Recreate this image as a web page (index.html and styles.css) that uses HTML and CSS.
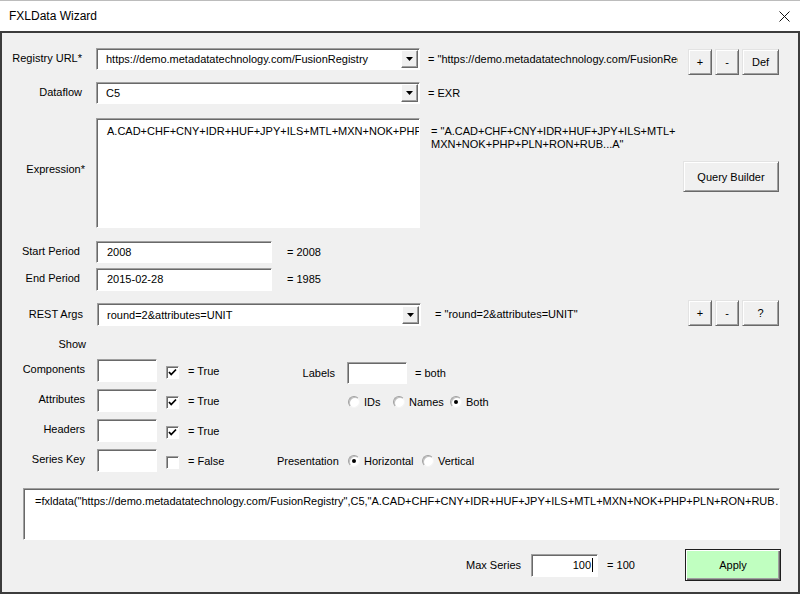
FILE: index.html
```html
<!DOCTYPE html>
<html lang="en">

<head>
    <meta charset="UTF-8">
    <title>FXLData Wizard</title>
    <link rel="stylesheet" href="styles.css">
</head>

<body>
    <div class="window">
        <div class="titlebar">
            <span class="title">FXLData Wizard</span>
            <svg class="close" width="11" height="11" viewBox="0 0 11 11">
                <path d="M0.5 0.5L10.5 10.5M10.5 0.5L0.5 10.5" stroke="#111" stroke-width="1" fill="none" />
            </svg>
        </div>

        <div class="dialog">
            <!-- registry -->
            <div class="row row-url">
                <div class="lbl">Registry URL*</div>
                <div class="combo sunken">
                    <span class="combo-text">https://demo.metadatatechnology.com/FusionRegistry</span>
                    <span class="drop"><svg width="7" height="4" viewBox="0 0 7 4"><path d="M0 0H7L3.5 4Z" /></svg></span>
                </div>
                <div class="eq eq-clip">= "https://demo.metadatatechnology.com/FusionReg</div>
                <div class="btns">
                    <button class="btn">+</button>
                    <button class="btn">-</button>
                    <button class="btn btn-wide">Def</button>
                </div>
            </div>

            <div class="row row-flow">
                <div class="lbl">Dataflow</div>
                <div class="combo sunken">
                    <span class="combo-text">C5</span>
                    <span class="drop"><svg width="7" height="4" viewBox="0 0 7 4"><path d="M0 0H7L3.5 4Z" /></svg></span>
                </div>
                <div class="eq">= EXR</div>
            </div>

            <!-- expression -->
            <div class="row row-expr">
                <div class="lbl lbl-expr">Expression*</div>
                <div class="memo sunken">A.CAD+CHF+CNY+IDR+HUF+JPY+ILS+MTL+MXN+NOK+PHP+PLN</div>
                <div class="eq eq-expr">= "A.CAD+CHF+CNY+IDR+HUF+JPY+ILS+MTL+<br>MXN+NOK+PHP+PLN+RON+RUB...A"</div>
                <button class="btn btn-query">Query Builder</button>
            </div>

            <div class="row row-start">
                <div class="lbl lbl-period">Start Period</div>
                <div class="textbox sunken">2008</div>
                <div class="eq eq-period">= 2008</div>
            </div>

            <div class="row row-end">
                <div class="lbl lbl-period">End Period</div>
                <div class="textbox sunken">2015-02-28</div>
                <div class="eq eq-period">= 1985</div>
            </div>

            <div class="row row-rest">
                <div class="lbl lbl-rest">REST Args</div>
                <div class="combo combo-rest sunken">
                    <span class="combo-text">round=2&amp;attributes=UNIT</span>
                    <span class="drop"><svg width="7" height="4" viewBox="0 0 7 4"><path d="M0 0H7L3.5 4Z" /></svg></span>
                </div>
                <div class="eq eq-rest">= "round=2&amp;attributes=UNIT"</div>
                <div class="btns">
                    <button class="btn">+</button>
                    <button class="btn">-</button>
                    <button class="btn btn-wide">?</button>
                </div>
            </div>

            <div class="show-title">Show</div>

            <!-- show options -->
            <div class="show">
                <div class="show-left">
                    <div class="opt-row">
                        <div class="lbl lbl-show">Components</div>
                        <div class="small-box sunken"></div>
                        <span class="check sunken"><svg width="11" height="11" viewBox="0 0 11 11"><path d="M2 5L4.2 7.5L9 2.5" stroke="#000" stroke-width="1.8" fill="none" /></svg></span>
                        <span class="eq eq-check">= True</span>
                    </div>
                    <div class="opt-row">
                        <div class="lbl lbl-show">Attributes</div>
                        <div class="small-box sunken"></div>
                        <span class="check sunken"><svg width="11" height="11" viewBox="0 0 11 11"><path d="M2 5L4.2 7.5L9 2.5" stroke="#000" stroke-width="1.8" fill="none" /></svg></span>
                        <span class="eq eq-check">= True</span>
                    </div>
                    <div class="opt-row">
                        <div class="lbl lbl-show">Headers</div>
                        <div class="small-box sunken"></div>
                        <span class="check sunken"><svg width="11" height="11" viewBox="0 0 11 11"><path d="M2 5L4.2 7.5L9 2.5" stroke="#000" stroke-width="1.8" fill="none" /></svg></span>
                        <span class="eq eq-check">= True</span>
                    </div>
                    <div class="opt-row">
                        <div class="lbl lbl-show">Series Key</div>
                        <div class="small-box sunken"></div>
                        <span class="check sunken"></span>
                        <span class="eq eq-check">= False</span>
                    </div>
                </div>

                <div class="show-right">
                    <div class="labels-row">
                        <div class="rlbl">Labels</div>
                        <div class="small-box sunken"></div>
                        <span class="eq">= both</span>
                    </div>
                    <div class="radio-row">
                        <span class="radio-opt opt-ids"><span class="radio"></span>IDs</span>
                        <span class="radio-opt opt-names"><span class="radio"></span>Names</span>
                        <span class="radio-opt"><span class="radio on"></span>Both</span>
                    </div>
                    <div class="pres-row">
                        <div class="rlbl">Presentation</div>
                        <span class="radio-opt opt-horiz"><span class="radio on"></span>Horizontal</span>
                        <span class="radio-opt"><span class="radio"></span>Vertical</span>
                    </div>
                </div>
            </div>

            <div class="formula sunken">=fxldata("https://demo.metadatatechnology.com/FusionRegistry",C5,"A.CAD+CHF+CNY+IDR+HUF+JPY+ILS+MTL+MXN+NOK+PHP+PLN+RON+RUB…A"</div>

            <div class="row row-bottom">
                <div class="max-lbl">Max Series</div>
                <div class="max-box sunken">100<span class="caret"></span></div>
                <div class="eq eq-max">= 100</div>
                <button class="btn btn-apply">Apply</button>
            </div>
        </div>
    </div>
</body>

</html>
```

FILE: styles.css
```css
* {
    box-sizing: border-box;
}

body {
    margin: 0;
    font-family: "Liberation Sans", Arial, sans-serif;
    font-size: 11px;
    color: #000;
    background: #f0f0f0;
}

.window {
    width: 800px;
    height: 594px;
    display: flex;
    flex-direction: column;
    background: #fff;
}

.titlebar {
    height: 31px;
    flex-shrink: 0;
    border-top: 1px solid #bcbcbc;
    display: flex;
    align-items: center;
    padding: 0 10px 0 9px;
}

.title {
    font-size: 12px;
}

.close {
    margin-left: auto;
}

.dialog {
    flex: 1;
    background: #f0f0f0;
    border: 2px solid #3c3c3c;
    display: flex;
    flex-direction: column;
}

/* 3d sunken look for edit fields */
.sunken {
    background: #fff;
    border: 1px solid;
    border-color: #a0a0a0 #fff #fff #a0a0a0;
    box-shadow: inset 1px 1px 0 #696969;
}

.row {
    display: flex;
    align-items: flex-start;
}

.lbl {
    width: 80px;
    flex-shrink: 0;
    text-align: right;
    line-height: 21px;
}

.eq {
    line-height: 22px;
    white-space: nowrap;
}

.row-url {
    margin-top: 15px;
}

.row-flow {
    margin-top: 7px;
}

.combo {
    width: 324px;
    height: 22px;
    margin-left: 14px;
    display: flex;
    align-items: center;
    padding-left: 9px;
}

.combo-text {
    flex: 1;
    white-space: nowrap;
    overflow: hidden;
}

.drop {
    width: 17px;
    height: 18px;
    margin-right: 1px;
    background: #f0f0f0;
    border: 1px solid;
    border-color: #fff #696969 #696969 #fff;
    box-shadow: inset -1px -1px 0 #a0a0a0;
    display: flex;
    align-items: center;
    justify-content: center;
}

.row > .eq {
    margin-left: 8px;
}

.eq-clip {
    width: 250px;
    overflow: hidden;
}

.btns {
    display: flex;
    gap: 3px;
    margin-left: auto;
    margin-right: 19px;
    margin-top: 1px;
}

.btn {
    height: 26px;
    width: 24px;
    padding: 0;
    font: inherit;
    color: #000;
    background: #f0f0f0;
    border: 1px solid;
    border-color: #e3e3e3 #696969 #696969 #e3e3e3;
    box-shadow: inset 1px 1px 0 #fff, inset -1px -1px 0 #a0a0a0;
}

.btn-wide {
    width: 37px;
}

/* expression */
.row-expr {
    margin-top: 14px;
}

.lbl-expr {
    width: 83px;
    padding-top: 44px;
    line-height: 14px;
}

.memo {
    width: 324px;
    height: 110px;
    margin-left: 11px;
    padding: 5px 0 0 10px;
    line-height: 14px;
    white-space: nowrap;
    overflow: hidden;
}

.row > .eq-expr {
    margin-left: 11px;
    margin-top: 7px;
    line-height: 13px;
}

.btn-query {
    width: 96px;
    height: 31px;
    margin-left: auto;
    margin-right: 19px;
    margin-top: 43px;
}

.row-start {
    margin-top: 13px;
}

.row-end {
    margin-top: 5px;
}

.lbl-period {
    width: 78px;
}

.textbox {
    width: 176px;
    height: 22px;
    margin-left: 16px;
    padding-left: 10px;
    line-height: 20px;
}

.row-end .textbox {
    height: 23px;
    line-height: 21px;
}

.row > .eq-period {
    margin-left: 15px;
}

/* rest args */
.row-rest {
    margin-top: 9px;
}

.lbl-rest {
    width: 81px;
    line-height: 22px;
    margin-top: 3px;
}

.combo-rest {
    height: 23px;
    margin-left: 14px;
    margin-top: 3px;
}

.row > .eq-rest {
    margin-left: 14px;
    line-height: 23px;
    margin-top: 3px;
}

.row-rest .btns {
    margin-top: 0;
}

.show-title {
    width: 84px;
    text-align: right;
    line-height: 14px;
    margin-top: 11px;
}

/* show options */
.show {
    display: flex;
    margin-top: 8px;
}

.show-left {
    width: 275px;
    display: flex;
    flex-direction: column;
    gap: 7px;
}

.opt-row {
    display: flex;
    align-items: center;
    height: 23px;
}

.lbl-show {
    width: 83px;
    margin-top: -3px;
}

.small-box {
    width: 60px;
    height: 23px;
    margin-left: 12px;
}

.check {
    width: 13px;
    height: 13px;
    margin-left: 9px;
    margin-top: 4px;
    display: flex;
    align-items: center;
    justify-content: center;
}

.opt-row .eq-check {
    margin-left: 9px;
}

.show-right {
    display: flex;
    flex-direction: column;
}

.labels-row {
    display: flex;
    align-items: center;
    margin-top: 3px;
    height: 22px;
}

.rlbl {
    width: 60px;
    text-align: right;
}

.labels-row .rlbl {
    padding-right: 2px;
}

.labels-row .small-box {
    height: 22px;
    margin-left: 10px;
}

.labels-row .eq {
    margin-left: 8px;
}

.radio-row {
    display: flex;
    align-items: center;
    height: 14px;
    margin-top: 11px;
    margin-left: 71px;
}

.radio-opt {
    display: flex;
    align-items: center;
    gap: 4px;
}

.opt-ids {
    width: 45px;
}

.opt-names {
    width: 57px;
}

.opt-horiz {
    width: 74px;
}

.radio {
    width: 12px;
    height: 12px;
    border-radius: 50%;
    background: #fff;
    border: 1px solid;
    border-color: #a0a0a0 #f4f4f4 #f4f4f4 #a0a0a0;
    box-shadow: inset 1px 1px 0 #c0c0c0;
    display: flex;
    align-items: center;
    justify-content: center;
}

.radio.on::after {
    content: "";
    width: 4px;
    height: 4px;
    border-radius: 50%;
    background: #000;
}

.pres-row {
    display: flex;
    align-items: center;
    height: 23px;
    margin-top: 40px;
}

.pres-row .rlbl {
    margin-right: 11px;
}

/* formula and bottom bar */
.formula {
    width: 757px;
    height: 52px;
    margin-left: 21px;
    margin-top: 16px;
    padding: 5px 0 0 11px;
    line-height: 14px;
    white-space: nowrap;
    overflow: hidden;
}

.row-bottom {
    margin-top: 9px;
    align-items: center;
}

.max-lbl {
    margin-left: 464px;
}

.max-box {
    width: 67px;
    height: 23px;
    margin-left: 10px;
    padding-right: 4px;
    display: flex;
    align-items: center;
    justify-content: flex-end;
}

.caret {
    width: 1px;
    height: 14px;
    background: #000;
    margin-left: 1px;
}

.row > .eq-max {
    margin-left: 9px;
}

.btn-apply {
    width: 96px;
    height: 32px;
    margin-left: auto;
    margin-right: 17px;
    background: #c0ffc0;
    border: 1px solid #1e1e1e;
    box-shadow: inset 1px 1px 0 #fff, inset -1px -1px 0 #696969, inset -2px -2px 0 #a0a0a0;
}
```
